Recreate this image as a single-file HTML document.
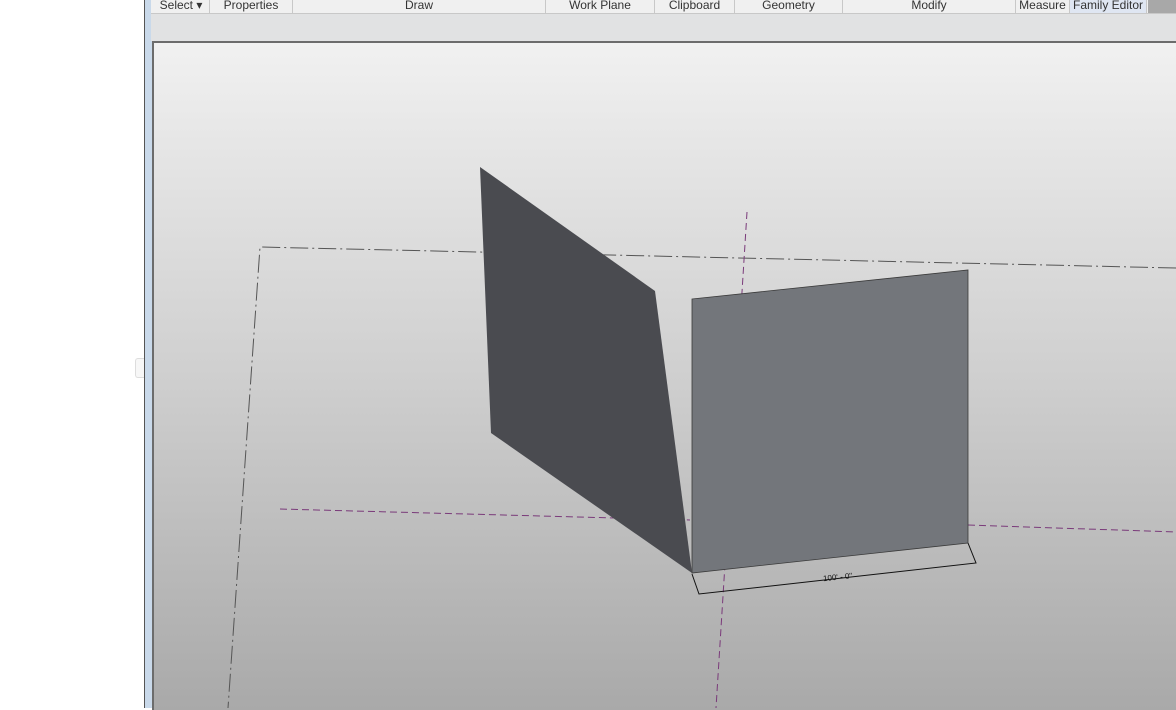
<!DOCTYPE html>
<html><head><style>
html,body{margin:0;padding:0;width:1176px;height:708px;overflow:hidden;background:#fff;font-family:"Liberation Sans",sans-serif;}
#frame{position:absolute;left:144px;top:0;width:1032px;height:708px;background:#c9d9ea;border-left:1px solid #555;}
#tabs{position:absolute;left:151px;top:0;width:1025px;height:13px;background:#f0f0f0;border-bottom:1px solid #c8c8c8;}
.t{position:absolute;top:0;height:13px;font-size:12px;line-height:10px;color:#333;text-align:center;border-right:1px solid #c8c8c8;overflow:hidden}
#band{position:absolute;left:151px;top:14px;width:1025px;height:27px;background:#e1e2e3;}
#view{position:absolute;left:152px;top:41px;width:1024px;height:667px;border-top:2px solid #6c6c6c;border-left:2px solid #6c6c6c;background:linear-gradient(#f1f1f1 0%,#e6e6e6 15%,#cfcfcf 50%,#b8b8b8 80%,#a9a9a9 100%);}
</style></head><body>
<div style="position:absolute;left:135px;top:358px;width:8px;height:18px;border:1px solid #ddd;border-right:none;border-radius:3px 0 0 3px;background:#f7f7f7"></div>
<div id="frame"></div>
<div id="tabs">
<div class="t" style="left:2px;width:56px">Select ▾</div>
<div class="t" style="left:59px;width:82px">Properties</div>
<div class="t" style="left:142px;width:252px">Draw</div>
<div class="t" style="left:395px;width:108px">Work Plane</div>
<div class="t" style="left:504px;width:79px">Clipboard</div>
<div class="t" style="left:584px;width:107px">Geometry</div>
<div class="t" style="left:692px;width:172px">Modify</div>
<div class="t" style="left:865px;width:53px">Measure</div>
<div class="t" style="left:919px;width:76px;background:#dfe6f2">Family Editor</div>
<div class="t" style="left:997px;width:28px;background:#a8a8a8;border:none"></div>
</div>
<div id="band"></div>
<div id="view"></div>
<svg style="position:absolute;left:0;top:0" width="1176" height="708">
<g fill="none" stroke="#555" stroke-width="1" stroke-dasharray="18,4,2,4">
<path d="M1176 268 L260 247 L228 708"/>
</g>
<g fill="none" stroke="#7a3a7a" stroke-width="1" stroke-dasharray="7,4">
<path d="M747 212 L716 708"/>
<path d="M280 509 L690 520"/>
<path d="M968 525 L1176 532"/>
</g>
<polygon points="480,167 655,291 692,573 491,433" fill="#4a4b50"/>
<polygon points="692,299 968,270 968,543 692,573" fill="#73767b" stroke="#3a3a3a" stroke-width="0.8"/>
<g stroke="#111" stroke-width="1" fill="none">
<path d="M692 574 L699 594 L976 563 L968 543"/>
</g>
<text x="823" y="580" font-size="8" fill="#111" transform="rotate(-6 835 577)">100' - 0"</text>
</svg>
</body></html>
